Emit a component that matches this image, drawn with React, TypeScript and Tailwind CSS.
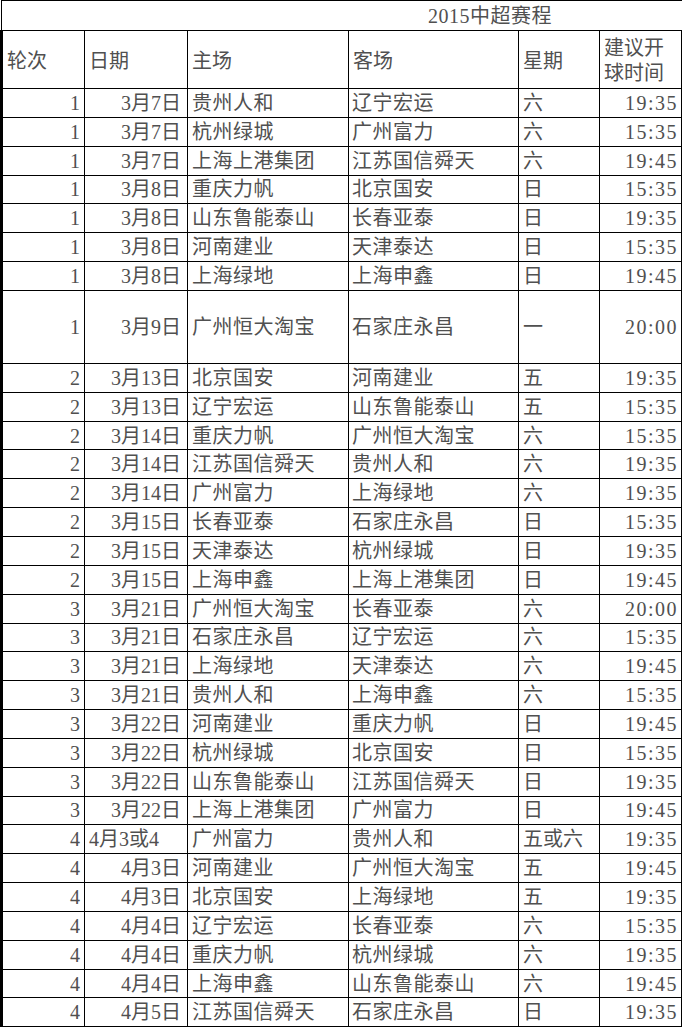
// @ts-nocheck
import React from "react";

const rows = [
  ["1", "3月7日", "贵州人和", "辽宁宏运", "六", "19:35"],
  ["1", "3月7日", "杭州绿城", "广州富力", "六", "15:35"],
  ["1", "3月7日", "上海上港集团", "江苏国信舜天", "六", "19:45"],
  ["1", "3月8日", "重庆力帆", "北京国安", "日", "15:35"],
  ["1", "3月8日", "山东鲁能泰山", "长春亚泰", "日", "19:35"],
  ["1", "3月8日", "河南建业", "天津泰达", "日", "15:35"],
  ["1", "3月8日", "上海绿地", "上海申鑫", "日", "19:45"],
  ["1", "3月9日", "广州恒大淘宝", "石家庄永昌", "一", "20:00", true],
  ["2", "3月13日", "北京国安", "河南建业", "五", "19:35"],
  ["2", "3月13日", "辽宁宏运", "山东鲁能泰山", "五", "15:35"],
  ["2", "3月14日", "重庆力帆", "广州恒大淘宝", "六", "15:35"],
  ["2", "3月14日", "江苏国信舜天", "贵州人和", "六", "19:35"],
  ["2", "3月14日", "广州富力", "上海绿地", "六", "19:35"],
  ["2", "3月15日", "长春亚泰", "石家庄永昌", "日", "15:35"],
  ["2", "3月15日", "天津泰达", "杭州绿城", "日", "19:35"],
  ["2", "3月15日", "上海申鑫", "上海上港集团", "日", "19:45"],
  ["3", "3月21日", "广州恒大淘宝", "长春亚泰", "六", "20:00"],
  ["3", "3月21日", "石家庄永昌", "辽宁宏运", "六", "15:35"],
  ["3", "3月21日", "上海绿地", "天津泰达", "六", "19:45"],
  ["3", "3月21日", "贵州人和", "上海申鑫", "六", "15:35"],
  ["3", "3月22日", "河南建业", "重庆力帆", "日", "19:45"],
  ["3", "3月22日", "杭州绿城", "北京国安", "日", "15:35"],
  ["3", "3月22日", "山东鲁能泰山", "江苏国信舜天", "日", "19:35"],
  ["3", "3月22日", "上海上港集团", "广州富力", "日", "19:45"],
  ["4", "4月3或4", "广州富力", "贵州人和", "五或六", "19:35"],
  ["4", "4月3日", "河南建业", "广州恒大淘宝", "五", "19:45"],
  ["4", "4月3日", "北京国安", "上海绿地", "五", "19:35"],
  ["4", "4月4日", "辽宁宏运", "长春亚泰", "六", "15:35"],
  ["4", "4月4日", "重庆力帆", "杭州绿城", "六", "19:35"],
  ["4", "4月4日", "上海申鑫", "山东鲁能泰山", "六", "19:45"],
  ["4", "4月5日", "江苏国信舜天", "石家庄永昌", "日", "19:35"],
];

export default function App() {
  return (
    <div
      className="w-[682px] h-[1027px] bg-white overflow-hidden text-[#505050] text-[20px] leading-none"
      style={{ fontFamily: '"Liberation Serif", "Noto Sans CJK SC", serif' }}
    >
      <table className="table-fixed border-collapse w-[680px]">
        <colgroup>
          <col className="w-[83px]" />
          <col className="w-[103px]" />
          <col className="w-[161px]" />
          <col className="w-[170px]" />
          <col className="w-[81px]" />
          <col className="w-[82px]" />
        </colgroup>
        <tbody>
          {/* Title */}
          <tr className="h-[30px]">
            <td colSpan={6} className="border-t border-l border-black p-0 align-middle">
              <div className="pl-[426px] tracking-[0.5px]">2015中超赛程</div>
            </td>
          </tr>

          {/* Header */}
          <tr className="h-[58px]">
            <td className="border-[1.5px] border-black border-l-[3px] px-[4px] pt-[3px]">轮次</td>
            <td className="border-[1.5px] border-black px-[4px] pt-[3px]">日期</td>
            <td className="border-[1.5px] border-black px-[4px] pt-[3px]">主场</td>
            <td className="border-[1.5px] border-black px-[4px] pt-[3px]">客场</td>
            <td className="border-[1.5px] border-black px-[4px] pt-[3px]">星期</td>
            <td className="border-[1.5px] border-black px-[4px] leading-[25px] pt-[2px]">
              建议开
              <br />
              球时间
            </td>
          </tr>

          {rows.map((r, i) => (
            <tr key={i} className={r[6] ? "h-[73px]" : "h-[28.85px]"}>
              <td className="border-[1.5px] border-black border-l-[3px] px-[4px] text-right">{r[0]}</td>
              <td className={`border-[1.5px] border-black px-[4px] whitespace-nowrap ${r[1].endsWith("日") ? "text-right pr-[6px]" : "text-left"}`}>
                {r[1]}
              </td>
              <td className="border-[1.5px] border-black px-[4px] tracking-[0.5px] whitespace-nowrap">{r[2]}</td>
              <td className="border-[1.5px] border-black px-[3px] tracking-[0.5px] whitespace-nowrap">{r[3]}</td>
              <td className="border-[1.5px] border-black px-[4px] whitespace-nowrap">{r[4]}</td>
              <td className="border-[1.5px] border-black px-[4px] text-right tracking-[1.5px] pr-[3px]">{r[5]}</td>
            </tr>
          ))}
        </tbody>
      </table>
    </div>
  );
}
